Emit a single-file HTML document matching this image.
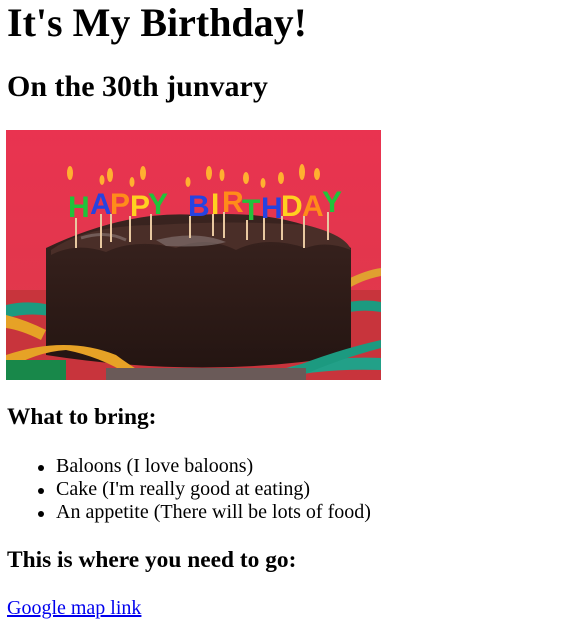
<!DOCTYPE html>
<html><head><meta charset="utf-8"><style>
html,body{margin:0;padding:0;background:#fff;width:562px;height:641px;overflow:hidden;font-family:"Liberation Serif",serif;color:#000}
.a{position:absolute;margin:0;white-space:nowrap;line-height:normal}
h1.a{font-size:40px;font-weight:bold;left:7px;top:-1px}
h2.a{font-size:30px;font-weight:bold;left:7px;top:70px}
h3.a{font-size:23.4px;font-weight:bold;left:7px}
.li{font-size:20px;left:56px}
.b{position:absolute;left:-18px;top:10px;width:6px;height:6px;border-radius:50%;background:#000}
a.a{font-size:20px;left:7px;top:597px;color:#0000ee;text-decoration:underline}
svg{position:absolute;left:6px;top:130px}
</style></head><body>
<h1 class="a">It's My Birthday!</h1>
<h2 class="a">On the 30th junvary</h2>
<svg width="375" height="250" viewBox="0 0 375 250">
<defs>
<linearGradient id="bg" x1="0" y1="0" x2="0" y2="1"><stop offset="0" stop-color="#e93350"/><stop offset="1" stop-color="#dd3a4a"/></linearGradient>
<linearGradient id="ck" x1="0" y1="0" x2="0" y2="1"><stop offset="0" stop-color="#3a2420"/><stop offset="0.5" stop-color="#2f1c18"/><stop offset="1" stop-color="#241512"/></linearGradient>
</defs>
<rect width="375" height="250" fill="url(#bg)"/>
<rect y="160" width="375" height="90" fill="#c8343c"/>
<path d="M0 175 Q30 168 60 180 L60 190 Q30 180 0 188Z" fill="#1c9a80"/>
<path d="M340 150 Q360 140 375 138 L375 146 Q355 150 340 160Z" fill="#e0a030"/>
<path d="M330 175 Q355 168 375 172 L375 182 Q350 178 330 186Z" fill="#1c9a80"/>
<path d="M40 118 Q120 80 190 85 Q290 78 345 118 L345 225 Q200 250 40 225Z" fill="url(#ck)"/>
<path d="M45 120 Q80 95 150 95 Q230 90 300 95 Q340 105 345 120 Q320 110 300 118 Q260 105 230 120 Q200 105 170 118 Q130 108 100 122 Q70 112 45 125Z" fill="#4a2e28"/>
<path d="M150 110 Q190 100 220 112 Q200 118 160 116Z" fill="#8a7a78" opacity=".6"/>
<path d="M75 108 Q100 100 120 110" stroke="#9a8a88" stroke-width="3" fill="none" opacity=".5"/>
<path d="M0 225 Q60 205 110 225 Q130 240 150 250 L130 250 Q100 228 60 220 Q30 222 0 240Z" fill="#e6a226"/>
<path d="M0 185 Q20 190 40 200 L35 210 Q15 200 0 198Z" fill="#e6a226"/>
<rect y="230" width="60" height="20" fill="#18884a"/>
<path d="M250 250 Q300 225 375 228 L375 240 Q310 238 270 250Z" fill="#22a088"/>
<path d="M280 240 Q330 220 375 210 L375 218 Q330 230 295 246Z" fill="#1c9a80"/>
<rect x="100" y="238" width="200" height="12" fill="#6a5a58"/>
<g font-family="Liberation Sans,sans-serif" font-weight="bold" font-size="30">
<text x="62" y="87" fill="#21c33a">H</text>
<text x="84" y="84" fill="#2643e0">A</text>
<text x="104" y="84" fill="#ff8c1a">P</text>
<text x="124" y="86" fill="#ffd020">P</text>
<text x="142" y="84" fill="#21c33a">Y</text>
<text x="182" y="86" fill="#2643e0">B</text>
<text x="205" y="84" fill="#ffd020">I</text>
<text x="216" y="82" fill="#ff8c1a">R</text>
<text x="236" y="90" fill="#21c33a">T</text>
<text x="255" y="88" fill="#2643e0">H</text>
<text x="275" y="86" fill="#ffd020">D</text>
<text x="296" y="86" fill="#ff8c1a">A</text>
<text x="316" y="82" fill="#21c33a">Y</text>
</g>
<g stroke="#e8c8a0" stroke-width="2">
<line x1="70" y1="88" x2="70" y2="118"/><line x1="95" y1="84" x2="95" y2="118"/><line x1="105" y1="84" x2="105" y2="112"/><line x1="124" y1="86" x2="124" y2="112"/><line x1="145" y1="84" x2="145" y2="110"/><line x1="184" y1="86" x2="184" y2="108"/><line x1="207" y1="84" x2="207" y2="106"/><line x1="218" y1="82" x2="218" y2="108"/><line x1="241" y1="90" x2="241" y2="110"/><line x1="258" y1="88" x2="258" y2="110"/><line x1="276" y1="86" x2="276" y2="110"/><line x1="298" y1="86" x2="298" y2="118"/><line x1="322" y1="82" x2="322" y2="110"/>
</g>
<g fill="#ffb030">
<ellipse cx="64" cy="43" rx="3" ry="7"/><ellipse cx="96" cy="50" rx="2.5" ry="5"/><ellipse cx="104" cy="45" rx="3" ry="7"/><ellipse cx="126" cy="52" rx="2.5" ry="5"/><ellipse cx="137" cy="43" rx="3" ry="7"/><ellipse cx="182" cy="52" rx="2.5" ry="5"/><ellipse cx="203" cy="43" rx="3" ry="7"/><ellipse cx="216" cy="45" rx="2.5" ry="6"/><ellipse cx="240" cy="48" rx="3" ry="6"/><ellipse cx="257" cy="53" rx="2.5" ry="5"/><ellipse cx="275" cy="48" rx="3" ry="6"/><ellipse cx="296" cy="42" rx="3" ry="8"/><ellipse cx="311" cy="44" rx="3" ry="6"/>
</g>
</svg>
<h3 class="a" style="top:404px">What to bring:</h3>
<div class="a li" style="top:455px"><span class="b"></span>Baloons (I love baloons)</div>
<div class="a li" style="top:478px"><span class="b"></span>Cake (I'm really good at eating)</div>
<div class="a li" style="top:501px"><span class="b"></span>An appetite (There will be lots of food)</div>
<h3 class="a" style="top:547px">This is where you need to go:</h3>
<a class="a" href="#">Google map link</a>
</body></html>
